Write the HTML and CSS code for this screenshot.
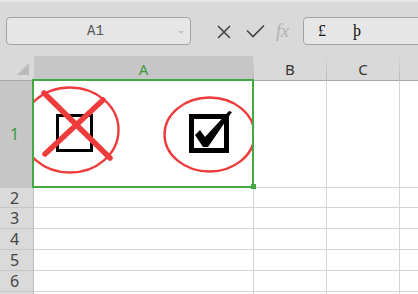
FILE: index.html
```html
<!DOCTYPE html>
<html lang="en">
<head>
    <meta charset="UTF-8">
    <title>Sheet</title>
    <link rel="stylesheet" href="styles.css">
</head>
<body>
    <div class="toolbar">
        <div class="name-box">
            <span class="cell-ref">A1</span>
            <span class="caret"></span>
        </div>
        <svg class="icon-cancel" width="14" height="14" viewBox="0 0 14 14">
            <path d="M1 1 L13 13 M13 1 L1 13" stroke="#444" stroke-width="1.6" fill="none"/>
        </svg>
        <svg class="icon-enter" width="19" height="14" viewBox="0 0 19 14">
            <path d="M1 6.5 L7 12.5 L18 1.5" stroke="#444" stroke-width="1.6" fill="none"/>
        </svg>
        <span class="fx">fx</span>
        <div class="formula">
            <span class="sym">£</span>
            <span class="sym sym-gap">þ</span>
        </div>
    </div>

    <div class="sheet">
        <div class="corner"><span class="tri"></span></div>
        <div class="col-head active">A</div>
        <div class="col-head">B</div>
        <div class="col-head">C</div>
        <div class="col-head last"></div>

        <div class="row-head active">1</div>
        <div class="cell selected">
            <svg class="marks" width="220" height="106" viewBox="0 0 220 106">
                <ellipse cx="36" cy="49" rx="48.5" ry="42.5" fill="none" stroke="#ee3b3b" stroke-width="2.4"/>
                <rect x="23.5" y="34.5" width="34" height="35" fill="none" stroke="#000" stroke-width="3"/>
                <path d="M10 12 L76 77 M69 19 L11 73" stroke="#ee3b3b" stroke-width="5.5" stroke-linecap="round" fill="none"/>
                <ellipse cx="175.5" cy="53.5" rx="45" ry="37" fill="none" stroke="#ee3b3b" stroke-width="2.4"/>
                <rect x="157.5" y="35.5" width="35" height="34" fill="none" stroke="#000" stroke-width="5"/>
                <path d="M161 54 L166 49 L171 56 L195 30 L198 31 L174 66 L169 66 Z" fill="#000"/>
            </svg>
            <span class="handle"></span>
        </div>
        <div class="cell"></div>
        <div class="cell"></div>
        <div class="cell last"></div>

        <div class="row-head">2</div>
        <div class="cell"></div><div class="cell"></div><div class="cell"></div><div class="cell last"></div>
        <div class="row-head">3</div>
        <div class="cell"></div><div class="cell"></div><div class="cell"></div><div class="cell last"></div>
        <div class="row-head">4</div>
        <div class="cell"></div><div class="cell"></div><div class="cell"></div><div class="cell last"></div>
        <div class="row-head">5</div>
        <div class="cell"></div><div class="cell"></div><div class="cell"></div><div class="cell last"></div>
        <div class="row-head">6</div>
        <div class="cell"></div><div class="cell"></div><div class="cell"></div><div class="cell last"></div>
        <div class="row-head"></div>
        <div class="cell"></div><div class="cell"></div><div class="cell"></div><div class="cell last"></div>
    </div>
</body>
</html>
```

FILE: styles.css
```css
body {
    margin: 0;
    padding: 0;
    width: 418px;
    height: 294px;
    overflow: hidden;
    background-color: #d9d9d9;
    font-family: "Noto Sans", "Liberation Sans", sans-serif;
}
.toolbar {
    box-sizing: border-box;
    height: 56px;
    border-top: 2px solid #e6e6e6;
    padding-top: 15px;
    padding-bottom: 11px;
    display: flex;
    align-items: center;
}
.name-box {
    box-sizing: border-box;
    width: 185px;
    height: 28px;
    margin-left: 6px;
    border: 1px solid #a3a3a3;
    border-radius: 4px;
    background-color: #e6e6e6;
    display: flex;
    align-items: center;
    justify-content: center;
    position: relative;
}
.cell-ref {
    font-family: "Liberation Mono", monospace;
    font-size: 14px;
    color: #555;
    margin-left: -6px;
}
.caret {
    position: absolute;
    right: 6px;
    top: 13px;
    width: 0;
    height: 0;
    border-left: 3px solid transparent;
    border-right: 3px solid transparent;
    border-top: 3px solid #c4c4c4;
}
.icon-cancel {
    margin-left: 26px;
    margin-top: 1px;
}
.icon-enter {
    margin-left: 15px;
}
.fx {
    margin-left: 11px;
    width: 19px;
    font-family: "Liberation Serif", serif;
    font-style: italic;
    font-size: 18px;
    color: #b0b0b0;
    line-height: 20px;
}
.formula {
    box-sizing: border-box;
    flex: 1;
    height: 28px;
    margin-left: 8px;
    margin-right: -6px;
    border: 1px solid #a3a3a3;
    border-radius: 4px;
    background-color: #e6e6e6;
    display: flex;
    align-items: center;
    padding-left: 14px;
}
.sym {
    font-family: "Liberation Serif", serif;
    font-size: 16px;
    color: #111;
}
.sym-gap {
    margin-left: 27px;
}
.sheet {
    display: grid;
    grid-template-columns: 34px 220px 73px 73px 1fr;
    grid-template-rows: 25px 107px 20px 21px 21px 21px 21px 21px;
}
.corner {
    position: relative;
    border-bottom: 1px solid #a8a8a8;
    background-color: #d9d9d9;
}
.tri {
    position: absolute;
    right: 5px;
    bottom: 5px;
    width: 0;
    height: 0;
    border-left: 12px solid transparent;
    border-bottom: 12px solid #bababa;
}
.col-head {
    box-sizing: border-box;
    background-color: #d9d9d9;
    border-right: 1px solid;
    border-image: linear-gradient(#d9d9d9, #b4b4b4) 1;
    border-image-width: 0 1px 0 0;
    font-size: 15px;
    color: #333;
    display: flex;
    align-items: center;
    justify-content: center;
    box-shadow: inset 0 -1px 0 #a8a8a8;
}
.col-head.active {
    background-color: #c6c6c6;
    color: #3c9a3c;
}
.col-head.last {
    border-image: none;
    border-right: none;
}
.row-head {
    box-sizing: border-box;
    background-color: #dadada;
    border-right: 1px solid #bdbdbd;
    border-bottom: 1px solid #c6c6c6;
    font-size: 16px;
    color: #444;
    display: flex;
    align-items: center;
    padding-left: 10px;
    line-height: 1;
}
.row-head.active {
    background-color: #c6c6c6;
    color: #3c9a3c;
}
.cell {
    box-sizing: border-box;
    background-color: #fff;
    border-right: 1px solid #d4d4d4;
    border-bottom: 1px solid #d4d4d4;
}
.cell.last {
    border-right: none;
}
.cell.selected {
    position: relative;
    border-right: none;
    border-bottom: none;
}
.cell.selected::after {
    content: "";
    position: absolute;
    left: -2px;
    top: -2px;
    right: 0;
    bottom: 0;
    border: 2px solid #45a845;
}
.marks {
    display: block;
}
.handle {
    position: absolute;
    right: -2px;
    bottom: -1px;
    width: 5px;
    height: 5px;
    background-color: #45a845;
    z-index: 2;
}
```
